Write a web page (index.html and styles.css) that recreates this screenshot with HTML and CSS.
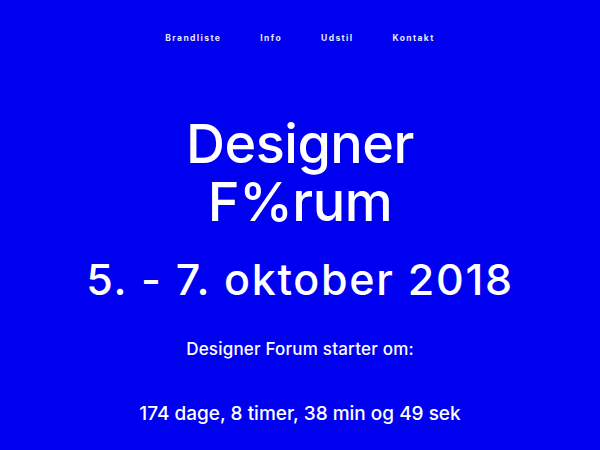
FILE: index.html
```
<!DOCTYPE html>
<html lang="da">
<head>
<meta charset="utf-8">
<title>Designer Forum</title>
<link rel="stylesheet" href="styles.css">
</head>
<body>
<nav class="nav">
  <a href="#">Brandliste</a>
  <a href="#">Info</a>
  <a href="#">Udstil</a>
  <a href="#">Kontakt</a>
</nav>
<main class="hero">
  <h1 class="title"><span class="line">Designer</span><span class="line">F%rum</span></h1>
  <p class="date">5. - 7. oktober 2018</p>
  <p class="lead">Designer Forum starter om:</p>
  <p class="count">174 dage, 8 timer, 38 min og 49 sek</p>
</main>
</body>
</html>
```
FILE: styles.css
```
html, body {
  margin: 0;
  padding: 0;
  background: #0000f0;
  color: #ffffff;
  font-family: Inter, "Liberation Sans", sans-serif;
}
body {
  width: 600px;
  height: 450px;
  overflow: hidden;
}
.nav {
  display: flex;
  justify-content: center;
  gap: 39px;
  padding-top: 33px;
  font-size: 8.5px;
  font-weight: 700;
  letter-spacing: 1.4px;
}
.nav a {
  color: #e8e8ff;
  text-decoration: none;
}
.hero {
  display: flex;
  flex-direction: column;
  align-items: center;
  text-align: center;
}
.title {
  margin: 72px 0 0;
  font-size: 54px;
  font-weight: 500;
  line-height: 58px;
  letter-spacing: -0.5px;
}
.line {
  display: block;
}
.date {
  margin: 23px 0 0;
  font-size: 43px;
  font-weight: 500;
  line-height: 50px;
  letter-spacing: 1.7px;
}
.lead {
  margin: 34px 0 0;
  font-size: 17px;
  font-weight: 500;
  line-height: 22px;
  letter-spacing: 0.2px;
}
.count {
  margin: 42px 0 0;
  font-size: 19px;
  font-weight: 500;
  line-height: 24px;
}
```
